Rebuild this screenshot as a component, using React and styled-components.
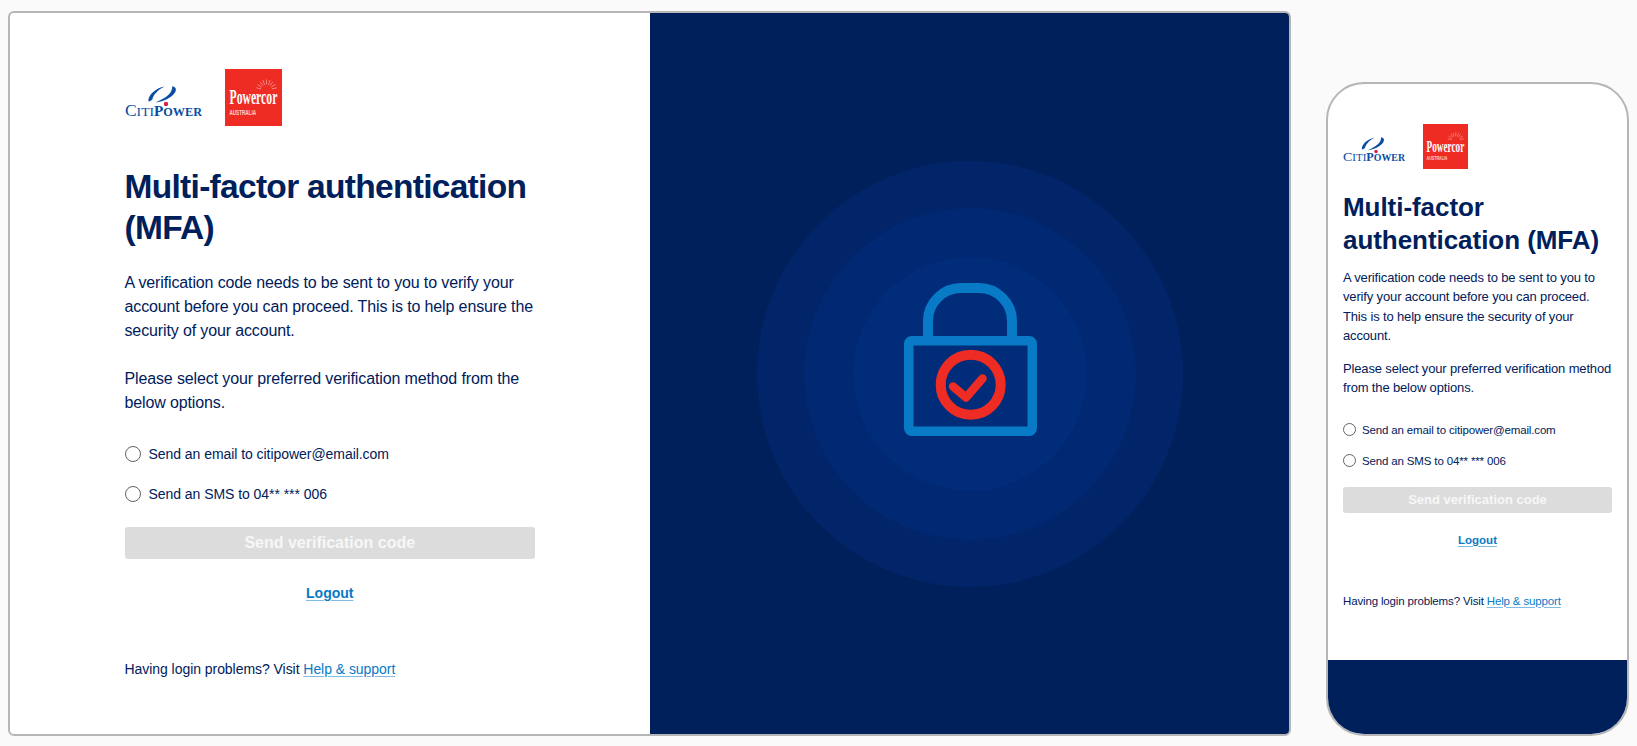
import React from "react";
import styled, { createGlobalStyle } from "styled-components";

const navy = "#00205b";
const blue = "#087ac6";
const red = "#ee2c24";

const GlobalStyle = createGlobalStyle`
  html, body {
    margin: 0;
    padding: 0;
    background: #fafafa;
  }
  body {
    font-family: "Liberation Sans", Arial, sans-serif;
    color: ${navy};
  }
`;

const Page = styled.div`
  width: 1637px;
  height: 746px;
  box-sizing: border-box;
  display: flex;
  align-items: flex-end;
  padding: 0 8px 10px 8px;
  gap: 35px;
  overflow: hidden;
`;

const DesktopFrame = styled.div`
  width: 1283px;
  height: 725px;
  box-sizing: border-box;
  border: 2px solid #b6b6b6;
  border-radius: 6px;
  display: grid;
  grid-template-columns: 640px 1fr;
  overflow: hidden;
  background: #fff;
`;

const PhoneFrame = styled.div`
  width: 303px;
  height: 654px;
  box-sizing: border-box;
  border: 2px solid #b6b6b6;
  border-radius: 38px;
  display: flex;
  flex-direction: column;
  overflow: hidden;
  background: #fff;
`;

const FormColumn = styled.div`
  box-sizing: border-box;
  width: ${(p) => (p.$compact ? "auto" : "525px")};
  padding: ${(p) => (p.$compact ? "40px 15px 0 15px" : "56px 0 0 114.5px")};
  flex: 1;
`;

const LogoRow = styled.div`
  display: flex;
  align-items: center;
  gap: ${(p) => (p.$compact ? "18px" : "23px")};
`;

const Title = styled.h1`
  margin: ${(p) => (p.$compact ? "22px 0 0" : "40px 0 0")};
  font-size: ${(p) => (p.$compact ? "26px" : "33.5px")};
  line-height: ${(p) => (p.$compact ? "33px" : "41px")};
  font-weight: 700;
  letter-spacing: ${(p) => (p.$compact ? "-0.05px" : "-0.7px")};
`;

const BodyStack = styled.div`
  margin-top: ${(p) => (p.$compact ? "11px" : "23px")};
  display: flex;
  flex-direction: column;
  gap: ${(p) => (p.$compact ? "14px" : "24px")};
`;

const Body = styled.p`
  margin: 0;
  font-size: ${(p) => (p.$compact ? "13px" : "16px")};
  line-height: ${(p) => (p.$compact ? "19.3px" : "24px")};
  letter-spacing: ${(p) => (p.$compact ? "-0.15px" : "-0.13px")};
`;

const Options = styled.div`
  margin-top: ${(p) => (p.$compact ? "23px" : "30px")};
  display: flex;
  flex-direction: column;
  gap: ${(p) => (p.$compact ? "13px" : "22px")};
`;

const Option = styled.label`
  display: flex;
  align-items: center;
  gap: ${(p) => (p.$compact ? "6px" : "8px")};
  font-size: ${(p) => (p.$compact ? "11.5px" : "14px")};
  letter-spacing: ${(p) => (p.$compact ? "-0.15px" : "-0.05px")};
  line-height: 18px;
`;

const Radio = styled.span`
  box-sizing: border-box;
  flex: none;
  width: ${(p) => (p.$compact ? "13px" : "16px")};
  height: ${(p) => (p.$compact ? "13px" : "16px")};
  border: 1px solid #5f6368;
  border-radius: 50%;
  background: #fff;
`;

const SendButton = styled.button`
  display: block;
  width: 100%;
  height: ${(p) => (p.$compact ? "26px" : "32px")};
  margin-top: ${(p) => (p.$compact ? "17px" : "24px")};
  border: 0;
  border-radius: 3px;
  padding: 0;
  background: #dcdcdc;
  color: #f7f7f7;
  font-family: inherit;
  font-size: ${(p) => (p.$compact ? "13px" : "16px")};
  font-weight: 700;
`;

const LogoutRow = styled.div`
  margin-top: ${(p) => (p.$compact ? "17px" : "25px")};
  text-align: center;
  line-height: 18px;
`;

const Logout = styled.a`
  color: ${blue};
  font-size: ${(p) => (p.$compact ? "11.5px" : "14px")};
  font-weight: 700;
  text-decoration: underline;
  text-decoration-color: #7fbbe3;
  text-underline-offset: 2px;
`;

const Help = styled.p`
  margin: ${(p) => (p.$compact ? "43px 0 0" : "58px 0 0")};
  font-size: ${(p) => (p.$compact ? "11.5px" : "14px")};
  letter-spacing: ${(p) => (p.$compact ? "-0.15px" : "-0.05px")};
  line-height: 18px;
`;

const HelpLink = styled.a`
  color: ${blue};
  text-decoration: underline;
  text-decoration-color: #7fbbe3;
  text-underline-offset: 2px;
`;

const ArtPanel = styled.div`
  background: ${navy};
  display: flex;
  align-items: center;
  justify-content: center;
`;

const PhoneBand = styled.div`
  flex: none;
  height: 74px;
  background: ${navy};
`;

const LogoText = styled.text`
  font-family: "Liberation Serif", serif;
`;

const CitiPowerLogo = ({ width }) => (
  <svg width={width} height={(width * 44) / 77} viewBox="0 -10 77 44">
    <path d="M23.500 15.500C22.500 9 31 2 39.500 0.500C33.500 3.500 28.500 8.500 27.500 13C26.500 14.500 25 15.500 23.500 15.500Z" fill="#0a4da2" />
    <path d="M47 0.500C50.500 0.500 52 3 50 6.500C47 11.500 39 15.500 30.500 16.500C37.500 13.500 44 9.500 46 5.500C47 3.500 47.500 2 47 0.500Z" fill="#0a4da2" />
    <circle cx="41" cy="18" r="2.200" fill="#d6224f" />
    <LogoText fontSize="12.500" y="30" x="0" fill="#0a4da2" textLength="29" lengthAdjust="spacingAndGlyphs">
      <tspan fontSize="16">C</tspan>ITI
    </LogoText>
    <LogoText fontSize="12.500" y="30" x="29" fontWeight="700" fill="#0a4da2" textLength="48" lengthAdjust="spacingAndGlyphs">
      <tspan fontSize="15.500">P</tspan>OWER
    </LogoText>
  </svg>
);

const rays = [-168, -148, -128, -110, -90, -70, -52, -32, -12];

const PowercorLogo = ({ size }) => (
  <svg width={size} height={size} viewBox="0 0 57 57">
    <rect width="57" height="57" fill={red} />
    <g stroke="#f9c3bd" strokeWidth="0.6">
      {rays.map((a) => {
        const r = (a * Math.PI) / 180;
        return (
          <line
            key={a}
            x1={41.5 + 5.5 * Math.cos(r)}
            y1={21 + 5.5 * Math.sin(r)}
            x2={41.5 + 10.5 * Math.cos(r)}
            y2={21 + 10.5 * Math.sin(r)}
          />
        );
      })}
    </g>
    <LogoText transform="translate(4.500 35) scale(0.585 1)" fontSize="20" fontWeight="700" fill="#fff">
      Powercor
    </LogoText>
    <text
      x="4.500"
      y="46"
      fontSize="6.500"
      fontWeight="700"
      fontFamily="Liberation Sans"
      fill="#fbd5d2"
      textLength="26.500"
      lengthAdjust="spacingAndGlyphs"
    >
      AUSTRALIA
    </text>
  </svg>
);

const LockArt = () => (
  <svg width="426" height="426" viewBox="0 0 426 426">
    <circle cx="213" cy="213" r="213" fill="#02256a" />
    <circle cx="213" cy="213" r="166" fill="#012872" />
    <circle cx="213" cy="213" r="117" fill="#012c79" />
    <g fill="none" stroke={blue}>
      <path d="M171 176V160A33 33 0 0 1 204 127H222A33 33 0 0 1 255 160V176" strokeWidth="10" />
      <rect x="151.750" y="179.750" width="123.500" height="90.500" rx="3" strokeWidth="9.500" strokeLinejoin="round" />
    </g>
    <circle cx="213.700" cy="223.700" r="30" fill="none" stroke={red} strokeWidth="10" />
    <path d="M196 225.500L209 236.500L225.500 217.500" fill="none" stroke={red} strokeWidth="8.500" strokeLinecap="round" strokeLinejoin="round" />
  </svg>
);

const MfaForm = ({ compact }) => (
  <FormColumn $compact={compact}>
    <LogoRow $compact={compact}>
      <CitiPowerLogo width={compact ? 62 : 77} />
      <PowercorLogo size={compact ? 45 : 57} />
    </LogoRow>
    <Title $compact={compact}>Multi-factor authentication (MFA)</Title>
    <BodyStack $compact={compact}>
      <Body $compact={compact}>
        A verification code needs to be sent to you to verify your account before you can
        proceed. This is to help ensure the security of your account.
      </Body>
      <Body $compact={compact}>
        Please select your preferred verification method from the below options.
      </Body>
    </BodyStack>
    <Options $compact={compact}>
      <Option $compact={compact}>
        <Radio $compact={compact} />
        Send an email to citipower@email.com
      </Option>
      <Option $compact={compact}>
        <Radio $compact={compact} />
        Send an SMS to 04** *** 006
      </Option>
    </Options>
    <SendButton $compact={compact} disabled>
      Send verification code
    </SendButton>
    <LogoutRow $compact={compact}>
      <Logout $compact={compact} href="#">
        Logout
      </Logout>
    </LogoutRow>
    <Help $compact={compact}>
      Having login problems? Visit <HelpLink href="#">Help &amp; support</HelpLink>
    </Help>
  </FormColumn>
);

export default function App() {
  return (
    <>
      <GlobalStyle />
      <Page>
        <DesktopFrame>
          <MfaForm />
          <ArtPanel>
            <LockArt />
          </ArtPanel>
        </DesktopFrame>
        <PhoneFrame>
          <MfaForm compact />
          <PhoneBand />
        </PhoneFrame>
      </Page>
    </>
  );
}
